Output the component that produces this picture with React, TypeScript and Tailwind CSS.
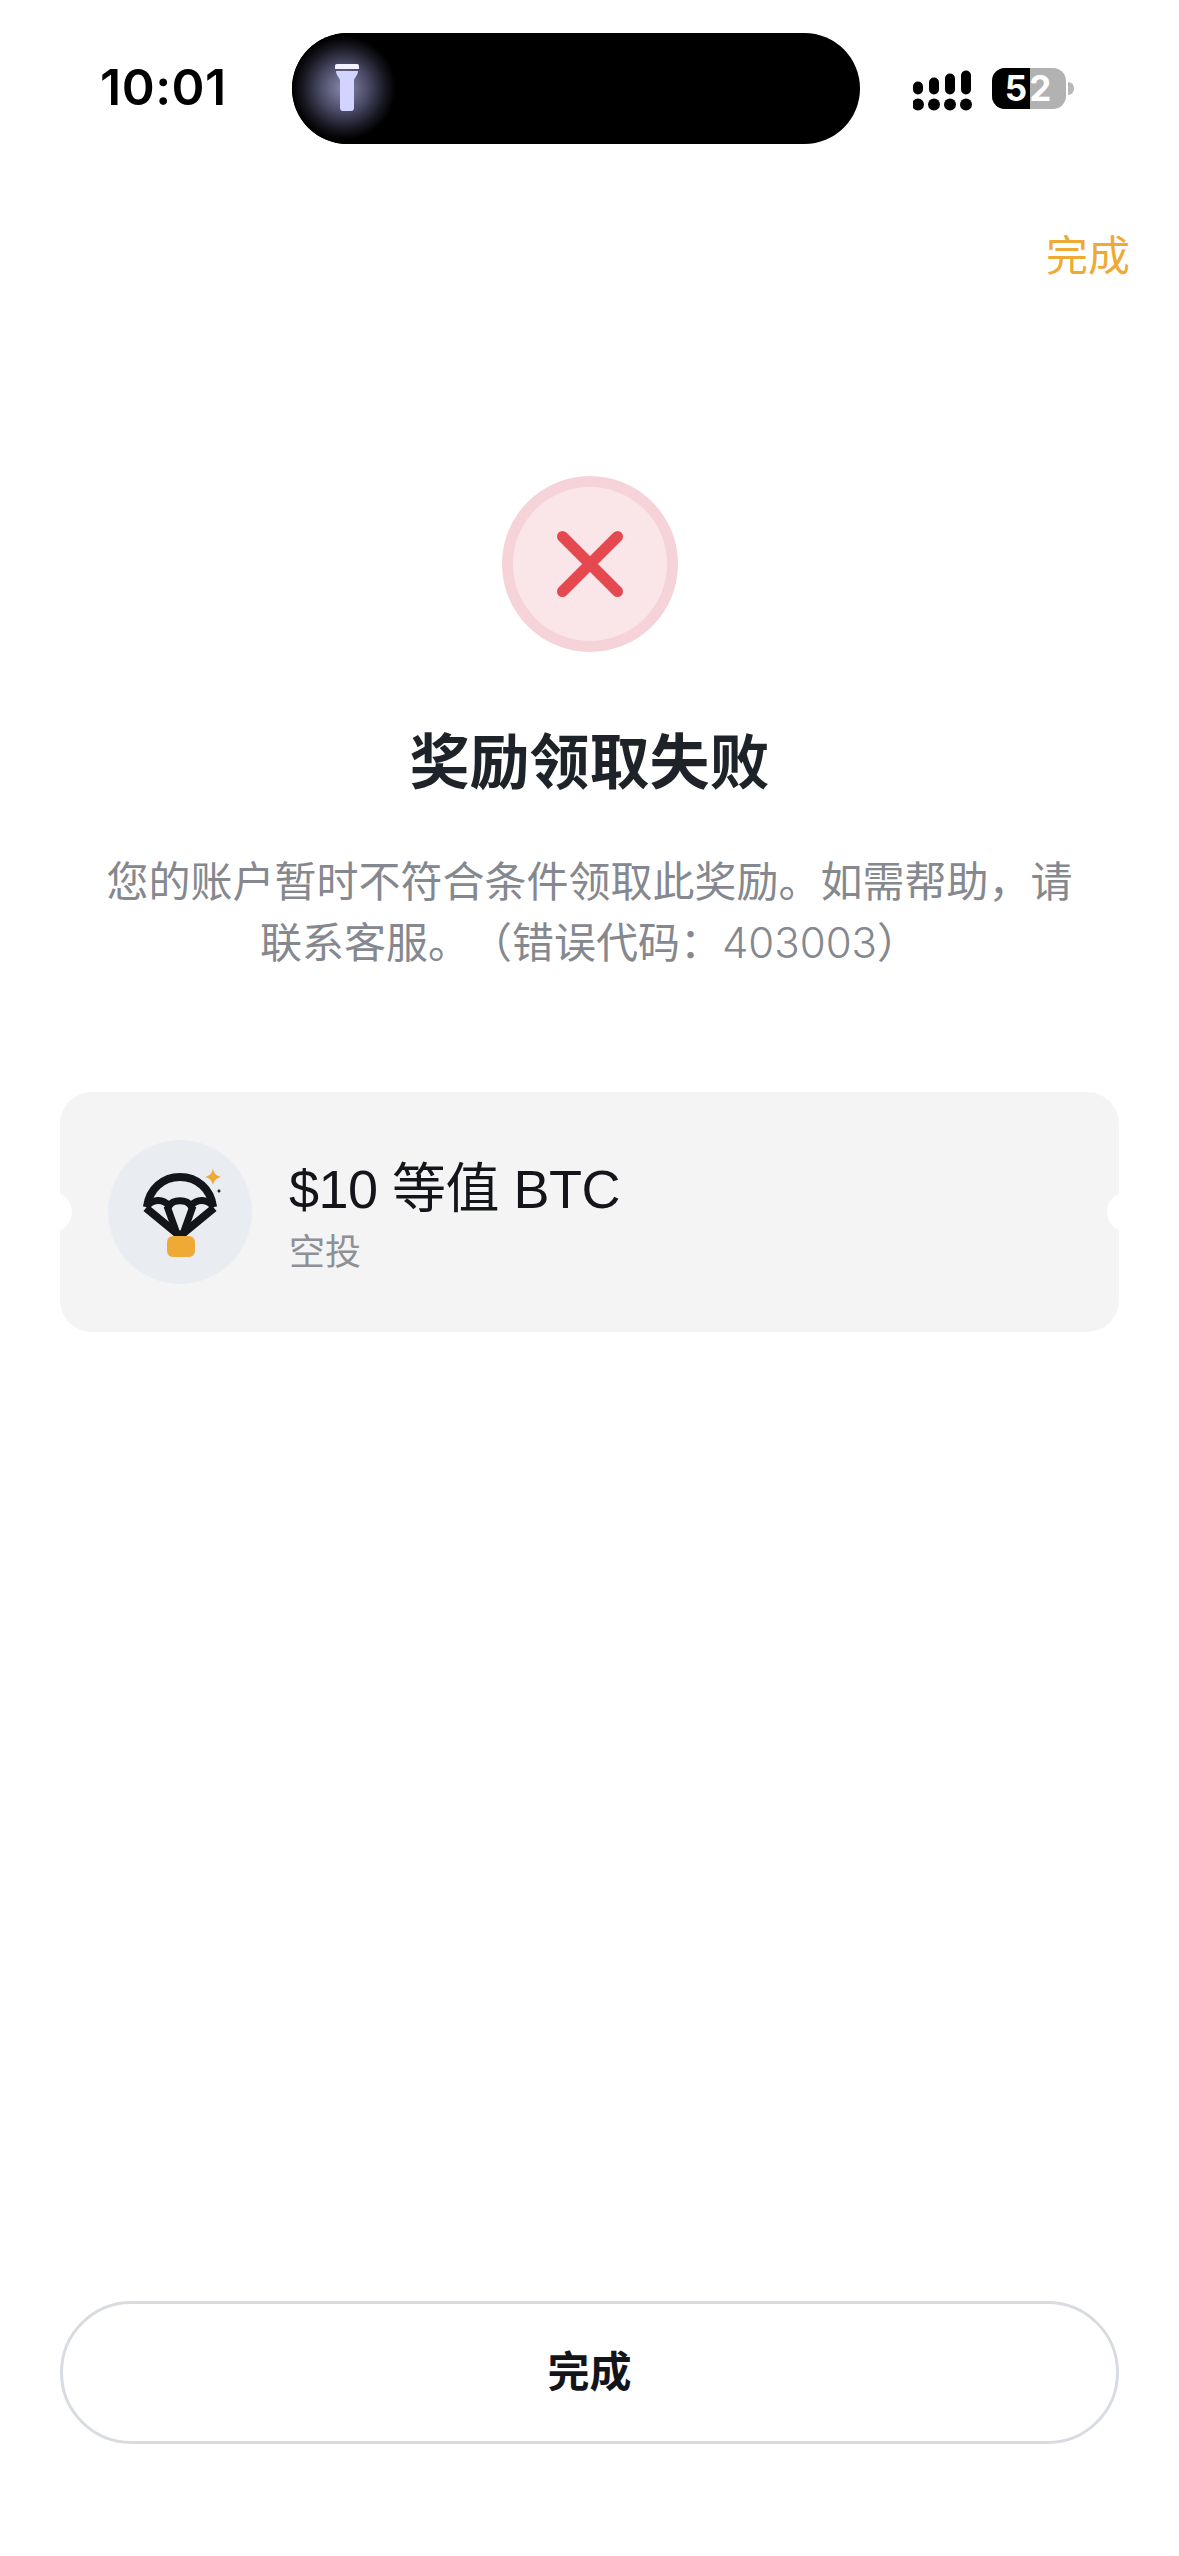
export default function App() {
  return (
    <div className="flex h-[2556px] w-[1179px] flex-col overflow-hidden bg-white [font-family:'Liberation_Sans','Noto_Sans_CJK_SC',sans-serif]">
      {/* status bar */}
      <div className="mt-[33px] flex h-[111px] shrink-0 items-center pl-[100px]">
        <div className="mb-[4px] w-[192px] text-[50px] leading-none font-semibold tracking-[0.5px] text-black [font-family:Inter,sans-serif]">10:01</div>
        <div className="relative h-[111px] w-[568px] rounded-[56px] bg-black">
          <div className="absolute left-0 top-0 flex h-[111px] w-[106px] items-center justify-center rounded-l-[56px] bg-[radial-gradient(circle_at_52px_55px,#8a8ab0_0,#4a4a66_24px,#16161f_42px,#000_52px)]">
            <svg className="ml-[4px]" width="30" height="52" viewBox="0 0 30 52">
              <path d="M3 3a2 2 0 0 1 2-2h20a2 2 0 0 1 2 2v3H3z" fill="#f3f0ff" />
              <path d="M4 8h22c0 4-3 6-4 9v28a3 3 0 0 1-3 3h-8a3 3 0 0 1-3-3V17c-1-3-4-5-4-9z" fill="#d3d3ff" />
            </svg>
          </div>
        </div>
        <svg className="ml-[53px]" width="59" height="60" viewBox="0 0 59 60" fill="#000">
          <rect x="0" y="22.500" width="10" height="13" rx="5" />
          <rect x="16" y="18.500" width="10" height="17" rx="5" />
          <rect x="32" y="14.500" width="10" height="21" rx="5" />
          <rect x="48" y="11.500" width="10" height="24" rx="5" />
          <circle cx="5" cy="45.500" r="6" />
          <circle cx="21" cy="45.500" r="6" />
          <circle cx="37" cy="45.500" r="6" />
          <circle cx="53" cy="45.500" r="6" />
        </svg>
        <div className="relative ml-[20px] flex h-[41px] w-[74px] items-center justify-center overflow-hidden rounded-[13px] bg-[#b2b2b2]">
          <div className="absolute inset-y-0 left-0 w-[38px] bg-black" />
          <span className="relative text-[35px] leading-none font-bold tracking-[2px] text-white [font-family:Inter,sans-serif]">52</span>
        </div>
        <div className="ml-[2px] h-[13px] w-[6px] rounded-r-[6px] bg-[#b8b8b8]" />
      </div>

      {/* header action */}
      <div className="mt-[86px] flex justify-end pr-[49px]">
        <span className="text-[42px] leading-[54px] text-[#eeaa35]">完成</span>
      </div>

      {/* result */}
      <div className="mt-[192px] flex flex-col items-center">
        <div className="flex h-[176px] w-[176px] items-center justify-center rounded-full border-[11px] border-[#f6d3d8] bg-[#fae6e9]">
          <svg width="66" height="66" viewBox="0 0 66 66" fill="none" stroke="#e5484f" strokeWidth="11" strokeLinecap="round">
            <path d="M5.500 5.500l55 55M60.500 5.500l-55 55" />
          </svg>
        </div>
        <h1 className="mt-[70px] text-[60px] leading-[84px] font-bold text-[#1e2329]">奖励领取失败</h1>
        <p className="mt-[47px] w-[980px] text-center text-[42px] leading-[60px] text-[#85888e] [text-spacing-trim:space-all]">
          您的账户暂时不符合条件领取此奖励。如需帮助，请联系客服。（错误代码：<span className="[font-family:Inter,sans-serif] font-light">403003</span>）
        </p>
      </div>

      {/* reward ticket */}
      <div className="relative mx-[60px] mt-[118px] flex h-[240px] shrink-0 items-center overflow-hidden rounded-[32px] bg-[#f4f4f4] pl-[48px]">
        <div className="absolute left-[-28px] top-[100px] h-[40px] w-[40px] rounded-full bg-white" />
        <div className="absolute right-[-28px] top-[100px] h-[40px] w-[40px] rounded-full bg-white" />
        <div className="flex h-[144px] w-[144px] shrink-0 items-center justify-center rounded-full bg-[#e9ecf1]">
          <svg width="144" height="144" viewBox="0 0 144 144" fill="none">
            <path d="M39 67C41 49 55 37 72 37s31 12 33 30" stroke="#14151a" strokeWidth="8" />
            <path d="M38 68l34 28 34-28" stroke="#14151a" strokeWidth="8" strokeLinejoin="round" />
            <path d="M38 67c6-8 17-9 23-1 4-7 18-7 22 0 6-8 17-7 23 1" stroke="#14151a" strokeWidth="7" />
            <path d="M59 66l10 28M85 66l-10 28" stroke="#14151a" strokeWidth="7" />
            <rect x="59" y="96" width="28" height="21" rx="6" fill="#eeaa35" />
            <path d="M105 29c1.500 5 3.500 7 8 8-4.500 1-6.500 3-8 8-1.500-5-3.500-7-8-8 4.500-1 6.500-3 8-8z" fill="#eeaa35" />
            <path d="M111 48.500c.4 1.600 1 2.100 2.500 2.500-1.500.4-2.100 1-2.500 2.500-.4-1.500-1-2.100-2.500-2.500 1.500-.4 2.100-.9 2.500-2.500z" fill="#14151a" />
          </svg>
        </div>
        <div className="ml-[37px] flex flex-col pt-[4px]">
          <div className="text-[54px] leading-[70px] tracking-[-0.5px] text-[#14151a]">$10 等值 BTC</div>
          <div className="mt-[7px] text-[36px] leading-[44px] text-[#8d9096]">空投</div>
        </div>
      </div>

      {/* bottom action */}
      <div className="mx-[60px] mt-auto mb-[112px] flex h-[143px] shrink-0 items-center justify-center rounded-full border-[3px] border-[#d8dce1] bg-white">
        <span className="text-[42px] leading-none font-bold text-[#14151a]">完成</span>
      </div>
    </div>
  );
}
